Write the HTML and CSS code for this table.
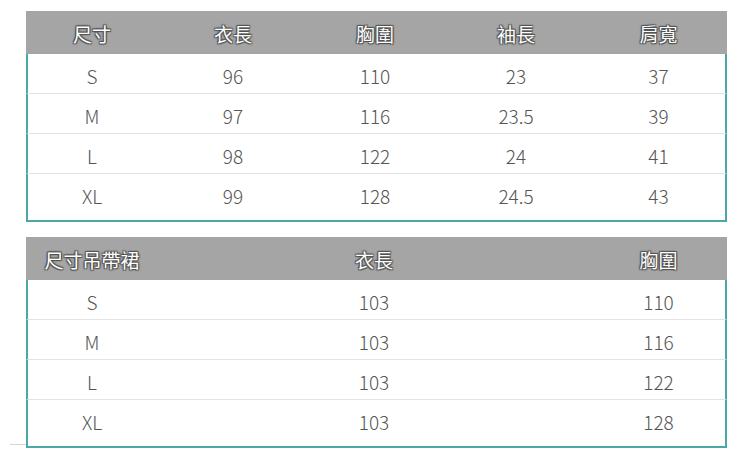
FILE: index.html
```html
<!DOCTYPE html>
<html lang="zh-Hant">
<head>
<meta charset="utf-8">
<link rel="stylesheet" href="styles.css">
</head>
<body>
<div class="page">
  <div class="table t1">
    <div class="row head">
      <div class="cell">尺寸</div><div class="cell">衣長</div><div class="cell">胸圍</div><div class="cell">袖長</div><div class="cell">肩寬</div>
    </div>
    <div class="row"><div class="cell">S</div><div class="cell">96</div><div class="cell">110</div><div class="cell">23</div><div class="cell">37</div></div>
    <div class="row"><div class="cell">M</div><div class="cell">97</div><div class="cell">116</div><div class="cell">23.5</div><div class="cell">39</div></div>
    <div class="row"><div class="cell">L</div><div class="cell">98</div><div class="cell">122</div><div class="cell">24</div><div class="cell">41</div></div>
    <div class="row last"><div class="cell">XL</div><div class="cell">99</div><div class="cell">128</div><div class="cell">24.5</div><div class="cell">43</div></div>
  </div>
  <div class="table t2">
    <div class="row head">
      <div class="cell">尺寸吊帶裙</div><div class="cell">衣長</div><div class="cell">胸圍</div>
    </div>
    <div class="row"><div class="cell">S</div><div class="cell">103</div><div class="cell">110</div></div>
    <div class="row"><div class="cell">M</div><div class="cell">103</div><div class="cell">116</div></div>
    <div class="row"><div class="cell">L</div><div class="cell">103</div><div class="cell">122</div></div>
    <div class="row last"><div class="cell">XL</div><div class="cell">103</div><div class="cell">128</div></div>
    <div class="stray"></div>
  </div>
</div>
</body>
</html>
```
FILE: styles.css
```css
* { box-sizing: border-box; }
html, body { margin: 0; padding: 0; background: #fff; }
body {
  font-family: "Noto Sans CJK TC", "Noto Sans", sans-serif;
  width: 750px;
  height: 452px;
  overflow: hidden;
}
.page {
  padding: 11px 23px 0 26px;
  display: flex;
  flex-direction: column;
  gap: 15px;
}
.table {
  position: relative;
  width: 701px;
  border-bottom: 2px solid #4aa9a6;
}
.row {
  display: grid;
  height: 40px;
  align-items: start;
  border-left: 2px solid #4aa9a6;
  border-right: 2px solid #4aa9a6;
  border-bottom: 1px solid #e3e3e3;
}
.t1 .row { grid-template-columns: 128px 154px 130px 152px 133px; }
.t2 .row { grid-template-columns: 128px 436px 133px; }
.row.last { border-bottom: none; height: 46px; }
.row.head {
  height: 43px;
  align-items: center;
  background: #a5a5a5;
  border-left: 0;
  border-right: 0;
  border-bottom: 0;
  padding-left: 2px;
  padding-right: 2px;
}
.cell {
  text-align: center;
  font-size: 19px;
  font-weight: 300;
  color: #555;
  line-height: 24px;
  padding-top: 10px;
}
.head .cell {
  color: #fff;
  font-size: 19px;
  font-weight: 400;
  padding-top: 3px;
  text-shadow: 0 0 1px #444, 1px 1px 1px #555, -1px -1px 1px #555, 1px -1px 1px #555, -1px 1px 1px #555;
}
.stray {
  position: absolute;
  left: -16px;
  bottom: 1px;
  width: 16px;
  height: 1px;
  background: #d6d6d6;
}
```
